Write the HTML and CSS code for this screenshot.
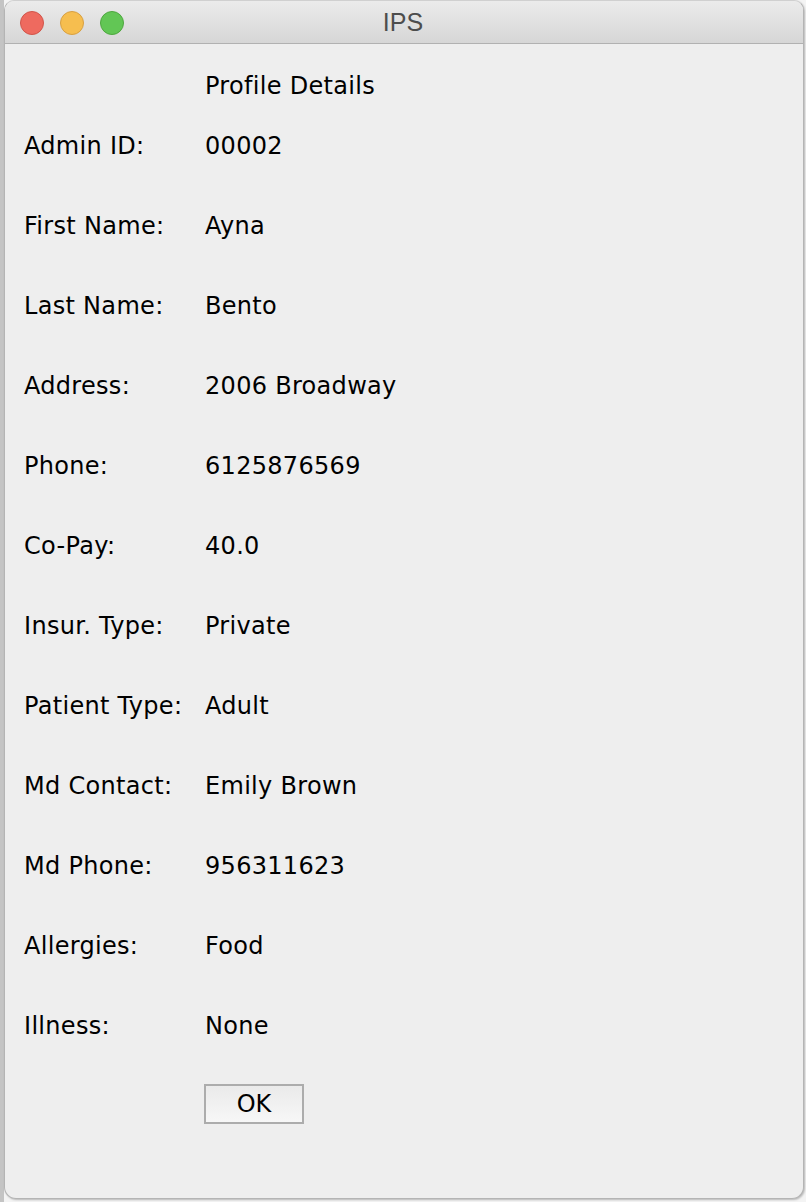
FILE: index.html
```html
<!DOCTYPE html>
<html>
<head>
<meta charset="utf-8">
<title>IPS</title>
<link rel="stylesheet" href="styles.css">
</head>
<body>
<div class="window">
  <div class="titlebar">
    <div class="lights">
      <span class="light red"></span>
      <span class="light yellow"></span>
      <span class="light green"></span>
    </div>
    <div class="title">IPS</div>
  </div>
  <div class="content">
    <div class="heading">Profile Details</div>
    <div class="form">
      <div>Admin ID:</div><div>00002</div>
      <div>First Name:</div><div>Ayna</div>
      <div>Last Name:</div><div>Bento</div>
      <div>Address:</div><div>2006 Broadway</div>
      <div>Phone:</div><div>6125876569</div>
      <div>Co-Pay:</div><div>40.0</div>
      <div>Insur. Type:</div><div>Private</div>
      <div>Patient Type:</div><div>Adult</div>
      <div>Md Contact:</div><div>Emily Brown</div>
      <div>Md Phone:</div><div>956311623</div>
      <div>Allergies:</div><div>Food</div>
      <div>Illness:</div><div>None</div>
    </div>
    <div class="btnrow"><button class="ok">OK</button></div>
  </div>
</div>
</body>
</html>
```
FILE: styles.css
```css
html, body {
  margin: 0;
  padding: 0;
}
body {
  width: 806px;
  height: 1202px;
  overflow: hidden;
  background: linear-gradient(to right, #c4c4c4 0, #c4c4c4 4px, #f4f4f4 4px);
}
.window {
  margin-left: 4px;
  width: 800px;
  height: 1199px;
  box-sizing: border-box;
  border: 1px solid #b4b4b4;
  border-top-color: #d0d0d0;
  border-radius: 10px 10px 12px 12px;
  background: #eeeeee;
  overflow: hidden;
  box-shadow: 1px 1px 2px rgba(0,0,0,0.25);
  display: flex;
  flex-direction: column;
}
.titlebar {
  height: 42px;
  flex: none;
  border-bottom: 1px solid #b1b1b1;
  background: linear-gradient(to bottom, #ebebeb, #d6d6d6);
  display: flex;
  align-items: center;
  position: relative;
}
.lights {
  display: flex;
  gap: 16px;
  padding-left: 15px;
  padding-top: 1px;
}
.light {
  width: 22px;
  height: 22px;
  border-radius: 50%;
  border: 1px solid transparent;
}
.red { background: #ee6a5f; border-color: #d1554a; }
.yellow { background: #f6be4f; border-color: #d8a042; }
.green { background: #62c655; border-color: #4ea73f; }
.title {
  position: absolute;
  left: 0;
  right: 0;
  top: 0;
  line-height: 42px;
  text-align: center;
  font-family: "Liberation Sans", Arial, sans-serif;
  font-size: 25px;
  color: #4d4d4d;
  padding-right: 2px;
}
.content {
  padding: 22px 0 0 19px;
  font-family: "DejaVu Sans", "Lucida Grande", sans-serif;
  font-size: 24px;
  letter-spacing: 0.3px;
  color: #000;
  line-height: 40px;
}
.heading {
  margin-left: 181px;
  margin-bottom: 20px;
}
.form {
  display: grid;
  grid-template-columns: 181px 1fr;
  row-gap: 40px;
}
.btnrow {
  margin-top: 38px;
  margin-left: 180px;
  line-height: normal;
}
.ok {
  display: block;
  width: 100px;
  height: 40px;
  box-sizing: border-box;
  border: 2px solid #acacac;
  background: linear-gradient(to bottom, #eaeaea, #f7f7f7);
  font-family: "DejaVu Sans", "Lucida Grande", sans-serif;
  font-size: 24px;
  color: #000;
  padding: 0;
  margin: 0;
  line-height: 36px;
}
```
